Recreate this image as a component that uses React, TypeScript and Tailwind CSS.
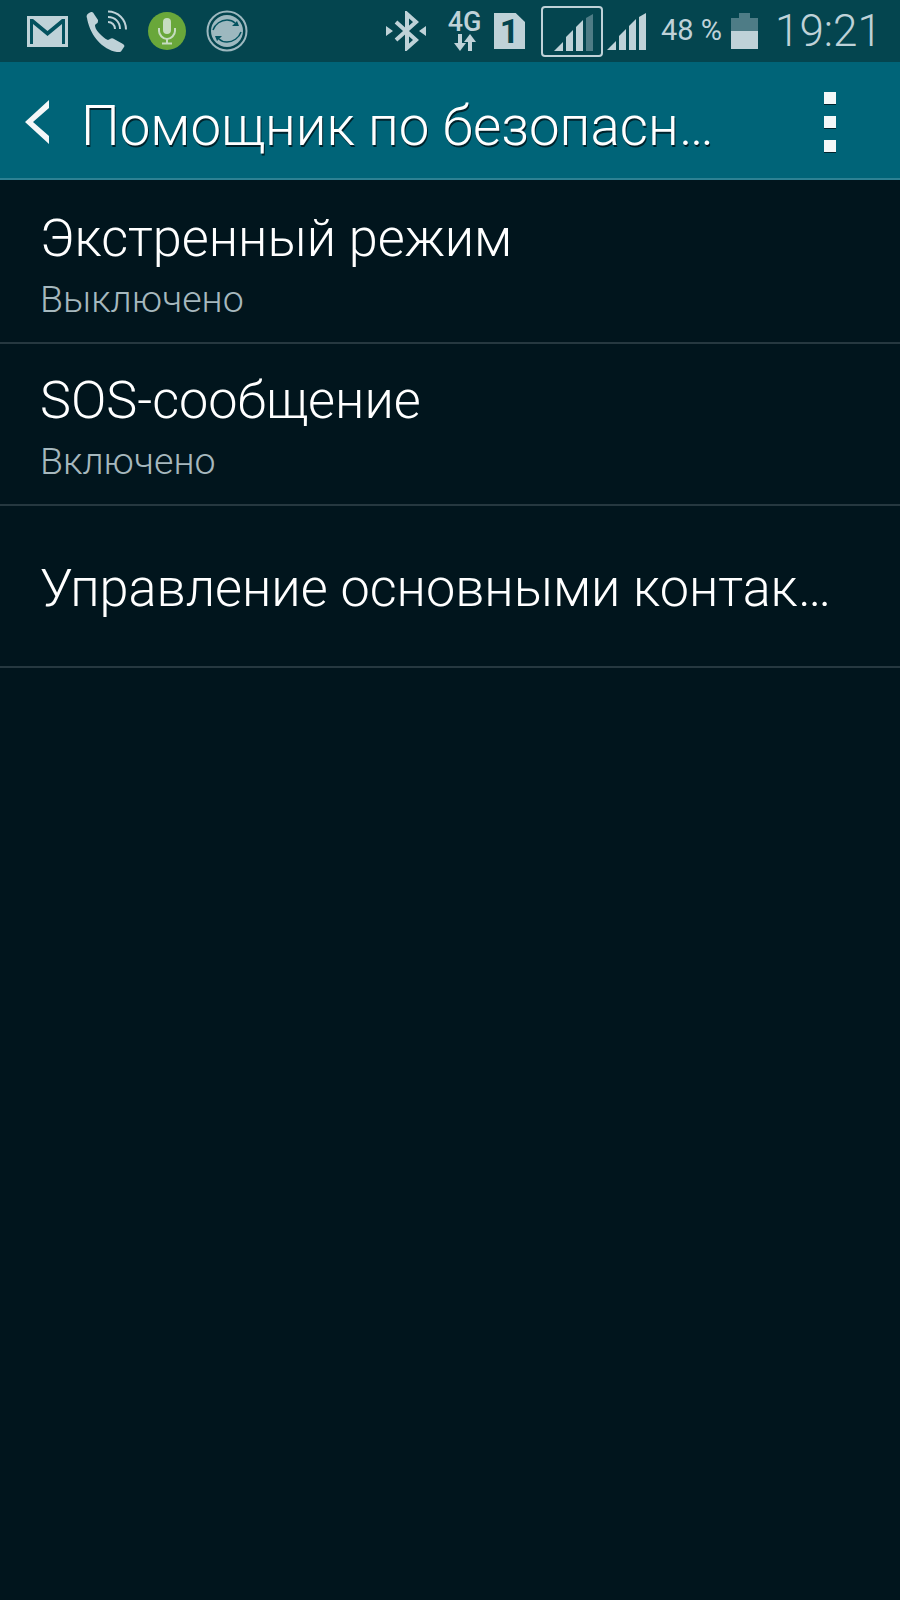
const roboto = "font-['Roboto',sans-serif]";

function MailIcon() {
  return (
    <svg width="41" height="31" viewBox="0 0 41 31" className="ml-[27px] shrink-0">
      <rect x="0" y="0" width="41" height="31" fill="#bfd2d8" />
      <path d="M3 28V3h3l14.500 12L35 3h3v25h-3V8L20.500 20 6 8v20z" fill="#04525f" />
    </svg>
  );
}

function PhoneIcon() {
  return (
    <svg width="42" height="42" viewBox="0 0 42 42" className="ml-[18px] shrink-0">
      <path
        d="M1 8c-1-2 0-4 2-5l2-1c1 0 2 0 3 2l4 6c0 2 0 3-2 4l-1 1c0 2 1 5 4 8s6 6 9 7l2-1c1-1 3-1 4 0l9 5c1 1 2 2 1 3l-2 3c-1 2-3 3-5 2-7-1-14-5-20-12C5 23 2 14 1 8z"
        fill="#bfd2d8"
      />
      <g fill="none" stroke="#bfd2d8" strokeWidth="2">
        <path d="M22 12c4 0 7 3 7 7" />
        <path d="M22 7c7 0 12 5 12 12" />
        <path d="M22 1.500c10 0 18 8 18 18" />
      </g>
    </svg>
  );
}

function MicIcon() {
  return (
    <svg width="38" height="38" viewBox="0 0 38 38" className="ml-[20px] shrink-0">
      <circle cx="19" cy="19" r="19" fill="#69a73a" />
      <rect x="15" y="6" width="8" height="16" rx="4" fill="#c6dcc0" />
      <path d="M11 16v3c0 4 4 8 8 8s8-4 8-8v-3M19 27v4M14 31.500h10" fill="none" stroke="#c6dcc0" strokeWidth="2" />
    </svg>
  );
}

function SyncIcon() {
  return (
    <svg width="42" height="42" viewBox="0 0 42 42" className="ml-[20px] shrink-0">
      <circle cx="21" cy="21" r="19.500" fill="none" stroke="#9db8bf" strokeWidth="2" />
      <circle cx="21" cy="21" r="16" fill="#9db8bf" />
      <g fill="none" stroke="#04525f" strokeWidth="1.500">
        <path d="M7 20c2-6 8-10 14-10 3 0 6 1 8 3" />
        <path d="M35 22c-2 6-8 10-14 10-3 0-6-1-8-3" />
      </g>
      <path d="M26 16h7l-2-5zM16 26H9l2 5z" fill="#04525f" />
    </svg>
  );
}

function BluetoothIcon() {
  return (
    <svg width="40" height="40" viewBox="0 0 40 40" className="ml-[138px] shrink-0">
      <path d="M10 11l20 18-9 8V3l9 8-20 18" fill="none" stroke="#bfd2d8" strokeWidth="4" />
      <path d="M0 15l7 5-7 5zM40 15l-7 5 7 5z" fill="#bfd2d8" />
    </svg>
  );
}

function NetworkIcon() {
  return (
    <div className="ml-[22px] flex w-[33px] shrink-0 flex-col items-center">
      <span className={`${roboto} text-[27px] leading-[23px] font-medium text-[#bfd2d8]`}>4G</span>
      <svg width="24" height="17" viewBox="0 0 24 17">
        <path d="M5 0h4v9h4l-6 8-6-8h4zM15 17h4V8h4l-6-8-6 8h4z" fill="#bfd2d8" />
      </svg>
    </div>
  );
}

function SimIcon() {
  return (
    <div className="relative ml-[13px] h-[36px] w-[31px] shrink-0 bg-[#bfd2d8] [clip-path:polygon(0_0,70%_0,100%_25%,100%_100%,0_100%)]">
      <span className={`${roboto} absolute inset-0 text-center text-[34px] leading-[36px] font-bold text-[#04454f]`}>1</span>
    </div>
  );
}

function SignalBars({ last }: { last: string }) {
  return (
    <svg width="41" height="37" viewBox="0 0 41 37" className="shrink-0">
      <path d="M0 37l9-9v9z" fill="#bfd2d8" />
      <path d="M12 37V23l7-7v21z" fill="#bfd2d8" />
      <path d="M22 37V13l7-7v31z" fill="#bfd2d8" />
      <path d="M32 37V4l7-4v37z" fill={last} />
    </svg>
  );
}

function Battery() {
  return (
    <div className="ml-[8px] flex w-[27px] shrink-0 flex-col items-center">
      <div className="h-[5px] w-[11px] bg-[#4e7c86]" />
      <div className="h-[13px] w-full bg-[#4e7c86]" />
      <div className="h-[18px] w-full bg-[#bfd2d8]" />
    </div>
  );
}

function StatusBar() {
  return (
    <div className="flex h-[62px] items-center bg-[#04454f]">
      <MailIcon />
      <PhoneIcon />
      <MicIcon />
      <SyncIcon />
      <BluetoothIcon />
      <NetworkIcon />
      <SimIcon />
      <div className="ml-[16px] flex h-[51px] w-[62px] shrink-0 items-end justify-center rounded-[4px] border-2 border-[#bfd2d8] pb-[4px] pl-[4px]">
        <SignalBars last="#4e7c86" />
      </div>
      <div className="ml-[4px]">
        <SignalBars last="#bfd2d8" />
      </div>
      <span className={`${roboto} ml-[13px] w-[62px] shrink-0 text-[29px] font-normal whitespace-nowrap text-[#bfd2d8]`}>48 %</span>
      <Battery />
      <span className={`${roboto} ml-[17px] text-[44px] leading-none font-light text-[#bfd2d8]`}>19:21</span>
    </div>
  );
}

function Header() {
  return (
    <div className="flex h-[118px] items-center border-b-2 border-[#2d8193] bg-[#006478] pt-[4px]">
      <svg width="28" height="48" viewBox="0 0 28 48" className="ml-[24px] shrink-0">
        <path d="M25 2v8L9 24l16 14v8L1 24z" fill="#f4f7f8" />
      </svg>
      <span className={`${roboto} mt-[8px] ml-[29px] text-[54.700px] leading-none font-light whitespace-nowrap text-white [text-shadow:1px_2px_0_#00222b]`}>
        Помощник по безопасн…
      </span>
      <div className="mr-[64px] ml-auto flex flex-col gap-[12px]">
        <div className="size-[12px] bg-[#f4f7f8] shadow-[0_1px_0_#00222b]" />
        <div className="size-[12px] bg-[#f4f7f8] shadow-[0_1px_0_#00222b]" />
        <div className="size-[12px] bg-[#f4f7f8] shadow-[0_1px_0_#00222b]" />
      </div>
    </div>
  );
}

function Row({ title, sub }: { title: string; sub?: string }) {
  return (
    <div className="flex h-[162px] flex-col justify-center border-b-2 border-[#263840] pt-[5px] pl-[40px]">
      <div className={`${roboto} text-[52.200px] leading-[62px] font-light whitespace-nowrap text-white`}>{title}</div>
      {sub && <div className={`${roboto} mt-[7px] text-[37.500px] leading-[44px] font-light text-[#a6b8be]`}>{sub}</div>}
    </div>
  );
}

export default function App() {
  return (
    <div className="h-[1600px] w-[900px] overflow-hidden bg-[#01151d]">
      <StatusBar />
      <Header />
      <div className="pt-[2px]">
        <Row title="Экстренный режим" sub="Выключено" />
        <Row title="SOS-сообщение" sub="Включено" />
        <Row title="Управление основными контак…" />
      </div>
    </div>
  );
}
